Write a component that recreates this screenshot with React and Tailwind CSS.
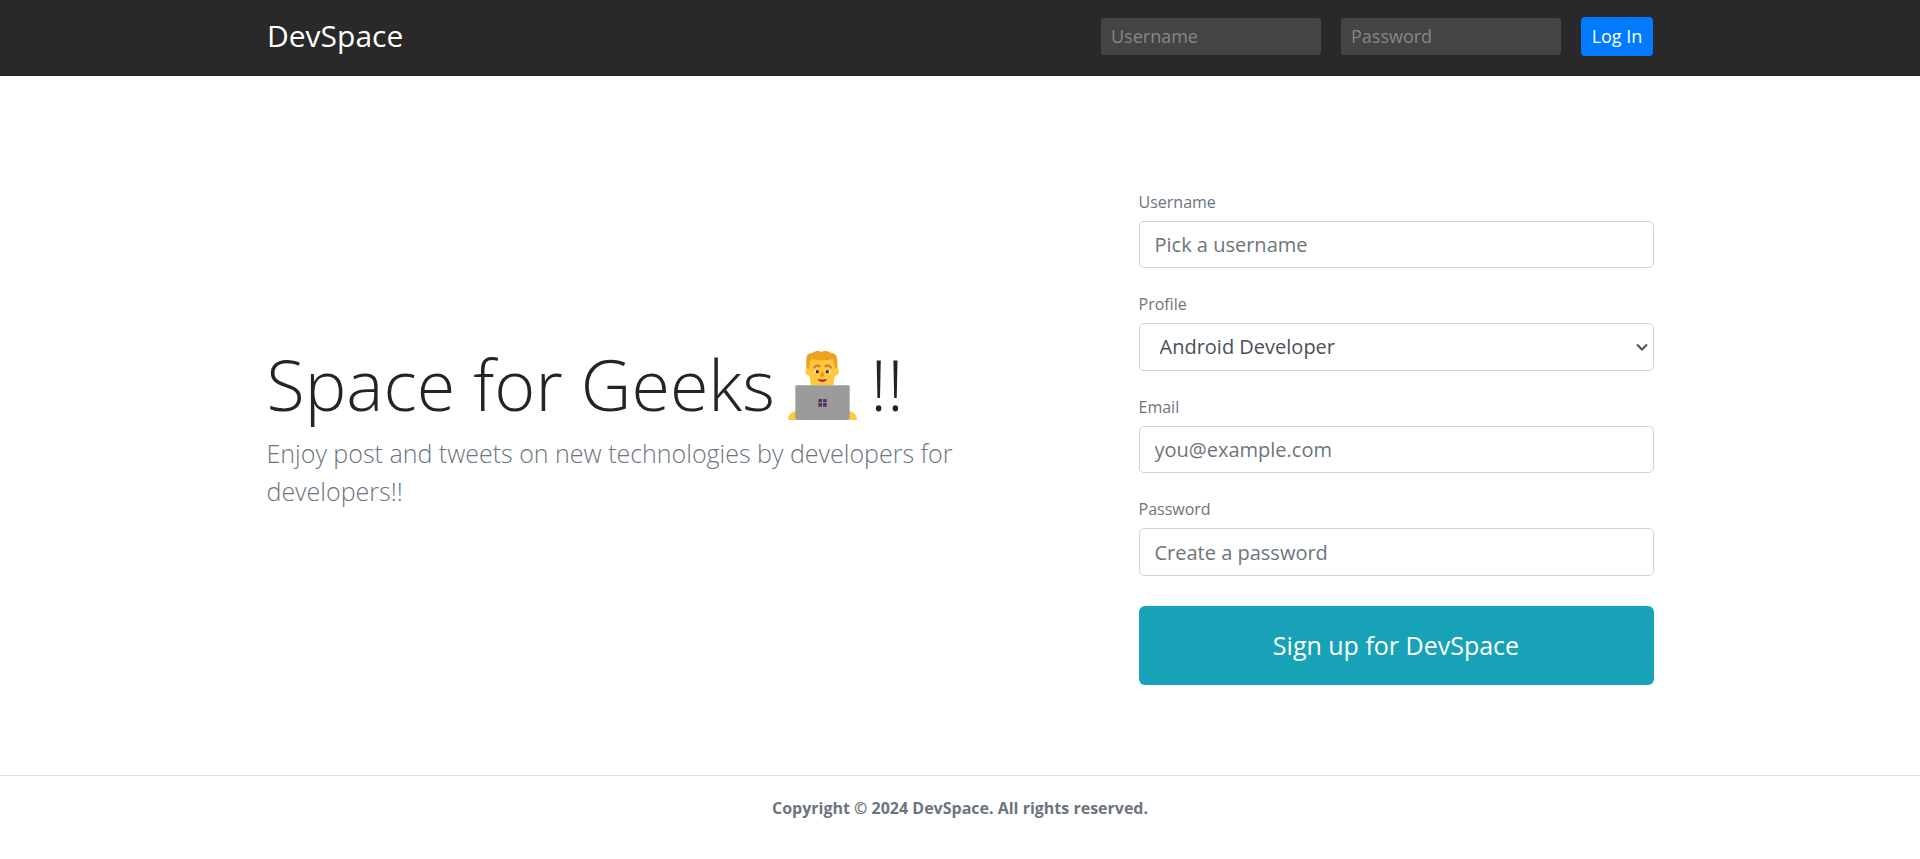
function Technologist() {
  return (
    <svg
      viewBox="24 33 207 207"
      className="-mx-[5px] inline-block size-[69px] align-[-9px]"
      role="img"
      aria-label="Technologist"
    >
      <path d="M79 84c-4 2-4 20 3 22l7 2c1 12 3 20 5 28h66c2-8 3-16 4-28l7-2c7-2 7-20 3-22l-8-40H87z" fill="#ffc83d" />
      <path d="M80 84C78 72 78 60 80 50c2-7 8-11 18-11 4-4 10-6 15-6 4 0 7 1 11 3 4-2 8-3 12-3 7 0 12 2 15 6 10 0 17 4 19 11 2 10 2 23 1 34l-7 2c-1-14-2-22-6-29-20 5-44 5-64 0-4 7-6 15-6 29z" fill="#f1a11e" />
      <path d="M103 82c3-6 12-7 15-3M136 79c4-4 13-3 16 3" fill="none" stroke="#d67d3e" strokeWidth="7" strokeLinecap="round" />
      <ellipse cx="110" cy="95" rx="8" ry="4" fill="#fff" />
      <ellipse cx="144" cy="95" rx="8" ry="4" fill="#fff" />
      <circle cx="112" cy="95" r="5" fill="#402a32" />
      <circle cx="142" cy="95" r="5" fill="#402a32" />
      <path d="M127 92c-2 5-6 12-5 16 1 3 9 3 10 0 1-4-3-11-5-16z" fill="#ef9809" />
      <path d="M113 117c9 3 19 3 28 0-3 11-25 11-28 0z" fill="#b3123d" />
      <path d="M24 240c0-14 9-25 24-27v27zM231 240c0-14-9-25-24-27v27z" fill="#ffc83d" />
      <rect x="46" y="135" width="163" height="105" rx="6" fill="#9b9b9b" />
      <path d="M46 141a6 6 0 0 1 6-6h151a6 6 0 0 1 6 6c-2-2-4-3-7-3H53c-3 0-5 1-7 3z" fill="#b0b0b0" />
      <path d="M115 177h11v10h-11zM129 177h11v10h-11zM115 189h11v11h-11zM129 189h11v11h-11z" fill="#533566" />
    </svg>
  );
}

function Field({ id, label, children }) {
  return (
    <div className="mb-[22px]">
      <label htmlFor={id} className="mb-[5px] block text-base leading-7 text-[#6c757d]">
        {label}
      </label>
      {children}
    </div>
  );
}

const control =
  "block w-full rounded-[5px] border border-[#ced4da] bg-white text-xl text-[#495057] placeholder:text-[#6c757d]";
const navInput =
  "h-[37px] w-[220px] rounded-[3px] bg-[#444444] px-2.5 pb-0.5 text-lg text-white placeholder:text-[#878787]";

export default function App() {
  return (
    <div className="bg-white font-['Open_Sans',sans-serif] text-[#212529]">
      <header className="border-b border-[#222222] bg-[#292929]">
        <nav className="mx-auto flex h-[75px] max-w-[1386px] items-start justify-between">
          <a href="#" className="mt-[13px] text-3xl leading-[45px] text-white">
            DevSpace
          </a>
          <form className="mt-[17px] flex items-center gap-5">
            <input className={navInput} type="text" placeholder="Username" aria-label="Username" />
            <input className={navInput} type="password" placeholder="Password" aria-label="Password" />
            <button type="button" className="h-[39px] w-[72px] rounded-[4px] bg-[#007bff] pb-0.5 text-lg text-white">
              Log In
            </button>
          </form>
        </nav>
      </header>

      <main className="mx-auto flex max-w-[1387px] items-center justify-between pt-28 pb-[90px]">
        <section className="w-[794px] pb-[22px]">
          <h1 className="mb-2 text-[70px] leading-[84px] font-light">
            Space for Geeks <Technologist /> !!
          </h1>
          <p className="text-[25px] leading-[38px] font-light text-[#6c757d]">
            Enjoy post and tweets on new technologies by developers for developers!!
          </p>
        </section>

        <form className="w-[515px]">
          <Field id="username" label="Username">
            <input id="username" type="text" placeholder="Pick a username" className={`${control} h-[47px] px-[15px]`} />
          </Field>
          <Field id="profile" label="Profile">
            <div className="relative">
              <select id="profile" className={`${control} h-12 appearance-none px-5 pb-px`}>
                <option>Android Developer</option>
                <option>Web Developer</option>
                <option>iOS Developer</option>
              </select>
              <svg
                viewBox="0 0 12 8"
                className="pointer-events-none absolute top-5 right-1.5 h-2 w-3"
                fill="none"
                stroke="#495057"
                strokeWidth="2"
                aria-hidden="true"
              >
                <path d="M1 1.500 6 6.500 11 1.500" />
              </svg>
            </div>
          </Field>
          <Field id="email" label="Email">
            <input id="email" type="email" placeholder="you@example.com" className={`${control} h-[47px] px-[15px]`} />
          </Field>
          <Field id="password" label="Password">
            <input id="password" type="password" placeholder="Create a password" className={`${control} h-12 px-[15px]`} />
          </Field>
          <button type="button" className="mt-2 h-[79px] w-full rounded-[6px] bg-[#17a2b8] text-[25px] text-white">
            Sign up for DevSpace
          </button>
        </form>
      </main>

      <footer className="border-t border-[#dfdfdf] py-5 text-center text-base leading-6 font-bold text-[#6c757d]">
        Copyright © 2024 DevSpace. All rights reserved.
      </footer>
    </div>
  );
}
